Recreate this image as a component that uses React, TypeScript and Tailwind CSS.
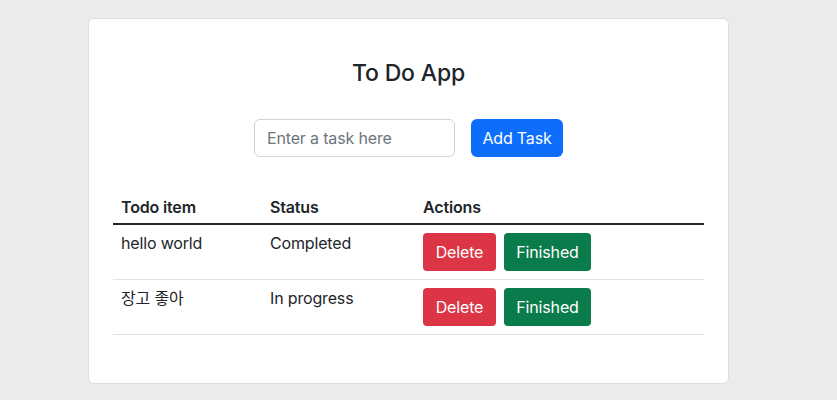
export default function App() {
  const todos = [
    { item: 'hello world', status: 'Completed' },
    { item: '장고 좋아', status: 'In progress' },
  ];

  return (
    <div
      className="min-h-[400px] bg-[#ebebeb] pl-[88px] pt-[18px] text-[#212529] tracking-[-0.01em]"
      style={{ fontFamily: 'Inter, "Noto Sans CJK KR", sans-serif' }}
    >
      <div className="w-[641px] h-[366px] rounded-md border border-[#dedede] bg-white px-6 pt-[41px]">
        <h3 className="text-center text-[23px] font-medium leading-[1.2]">To Do App</h3>

        <div className="mt-[31px] flex justify-center gap-4">
          <input
            type="text"
            placeholder="Enter a task here"
            className="h-[38px] w-[201px] rounded-md border border-[#ced4da] px-3 text-[16px] placeholder:text-[#6c757d] outline-none"
          />
          <button className="h-[38px] w-[92px] rounded-md bg-[#0d6efd] text-[16px] text-white">Add Task</button>
        </div>

        <table className="mt-[34px] w-full border-collapse text-left text-[16px]">
          <thead>
            <tr className="border-b-2 border-[#212529]">
              <th className="w-[149px] px-2 py-[4px] font-semibold leading-6">Todo item</th>
              <th className="w-[153px] px-2 py-[4px] font-semibold leading-6">Status</th>
              <th className="px-2 py-[4px] font-semibold leading-6">Actions</th>
            </tr>
          </thead>
          <tbody>
            {todos.map((t) => (
              <tr key={t.item} className="border-b border-[#dee2e6]">
                <td className="px-2 py-[6px] align-top leading-6">{t.item}</td>
                <td className="px-2 py-[6px] align-top leading-6">{t.status}</td>
                <td className="px-2 py-[8px] align-top">
                  <div className="flex gap-2">
                    <button className="h-[38px] w-[73px] rounded-[4px] bg-[#dc3545] text-white">Delete</button>
                    <button className="h-[38px] w-[87px] rounded-[4px] bg-[#0a7b4a] text-white">Finished</button>
                  </div>
                </td>
              </tr>
            ))}
          </tbody>
        </table>
      </div>
    </div>
  );
}
